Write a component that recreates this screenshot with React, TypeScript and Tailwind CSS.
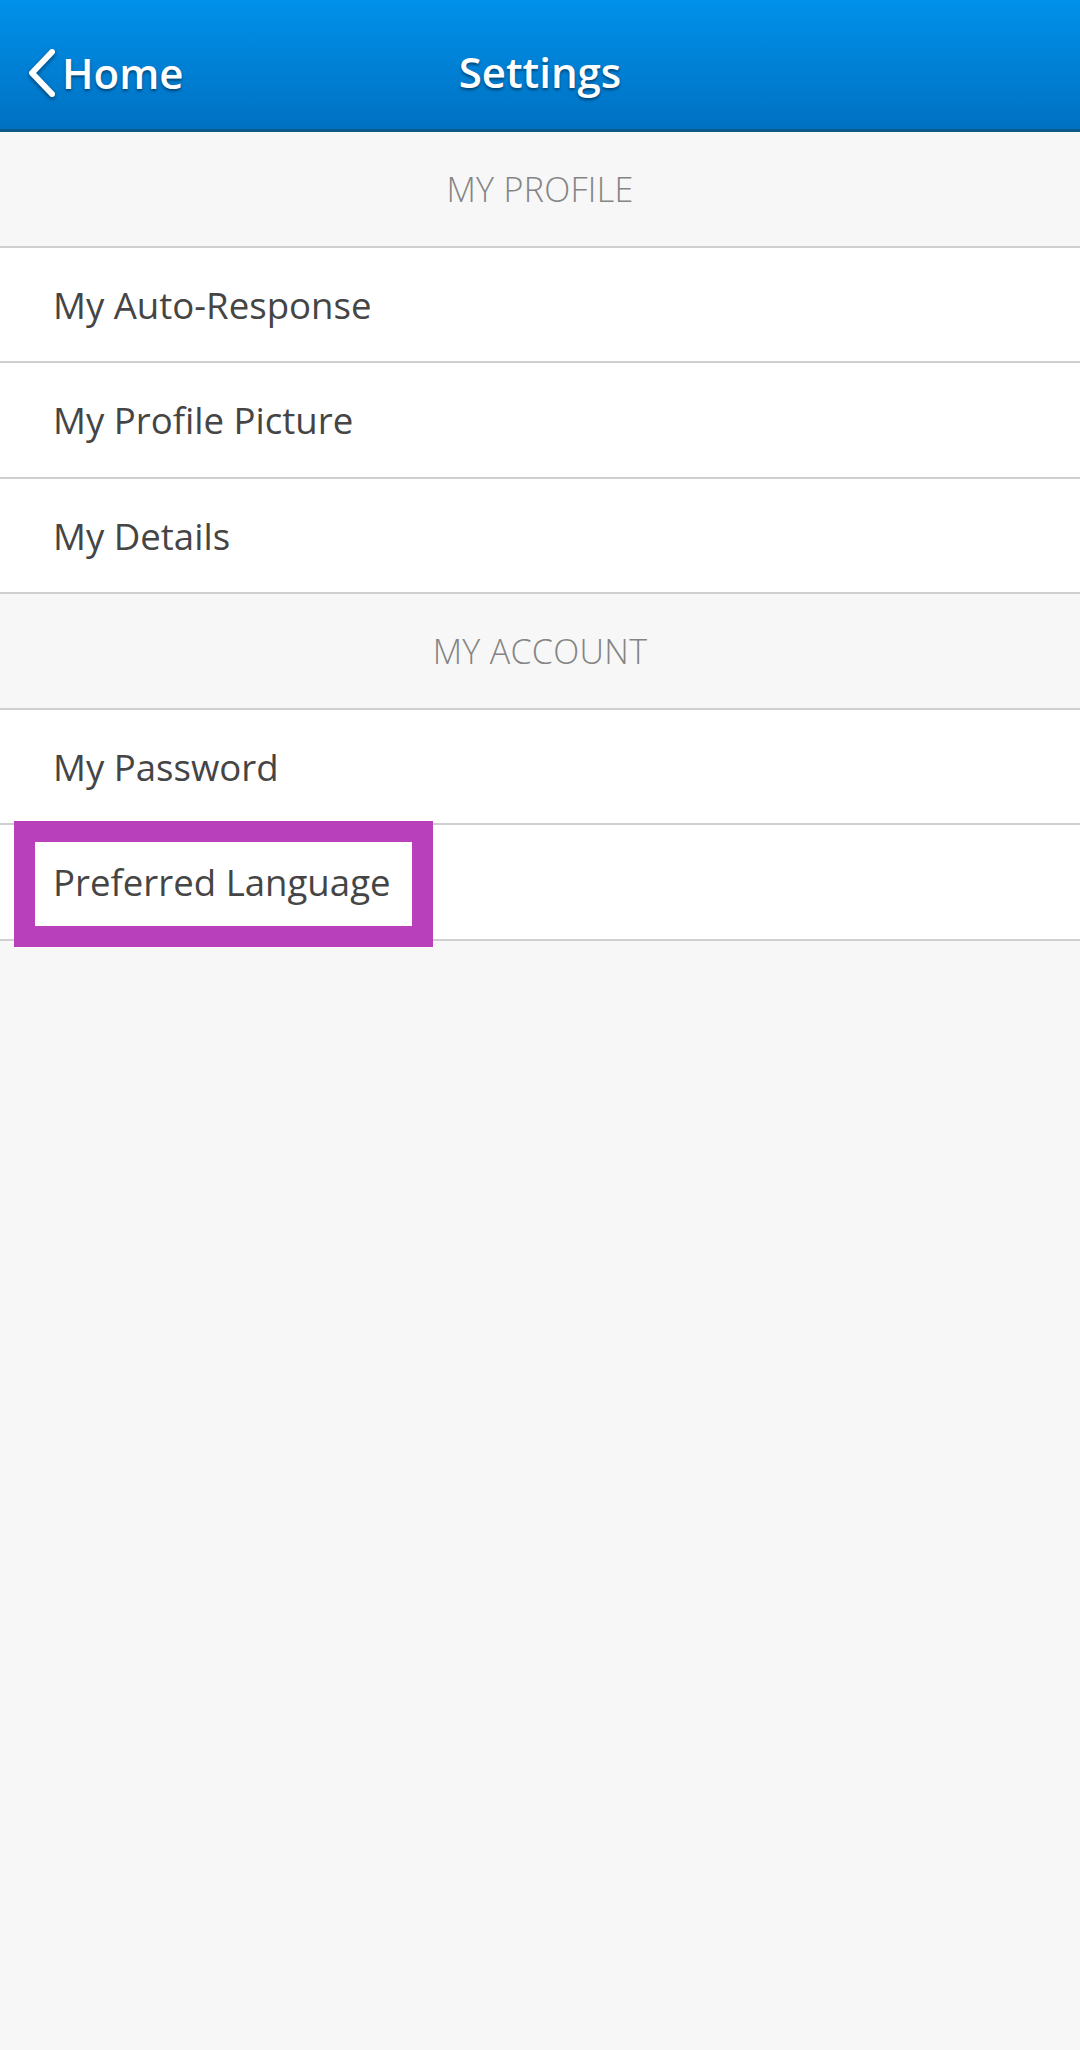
import React from "react";

function Row({ label }: { label: string }) {
  return (
    <div className="h-[115.5px] bg-white border-b-2 border-[#cfcfcf] flex items-center pl-[53px]">
      <span className="text-[36.6px] text-[#454545] leading-none pt-[2px]">{label}</span>
    </div>
  );
}

function SectionHeader({ label }: { label: string }) {
  return (
    <div className="h-[115.5px] bg-[#f7f7f7] border-b-2 border-[#cfcfcf] flex items-center justify-center">
      <span className="text-[34px] font-light text-[#848484] leading-none uppercase tracking-[0.3px]">{label}</span>
    </div>
  );
}

export default function App() {
  return (
    <div
      className="w-[1080px] h-[2050px] bg-[#f7f7f7] relative overflow-hidden"
      style={{ fontFamily: '"Open Sans", "Noto Sans", sans-serif' }}
    >
      <header className="h-[132px] bg-gradient-to-b from-[#0091ea] to-[#0071c2] border-b-[3px] border-[#0b5a88] relative flex items-center justify-center">
        <div className="absolute left-[24px] top-[48px] flex items-center">
          <svg width="36" height="50" viewBox="0 0 36 50" className="[filter:drop-shadow(0_2px_2px_rgba(0,0,0,0.45))]">
            <path d="M28 4 L8 25 L28 46" fill="none" stroke="#ffffff" strokeWidth="6" strokeLinecap="round" strokeLinejoin="round" />
          </svg>
          <span className="text-[42px] font-semibold text-white leading-none ml-[2px] [text-shadow:0_2px_3px_rgba(0,0,0,0.45)]">
            Home
          </span>
        </div>
        <span className="text-[42px] font-semibold text-white leading-none mt-[14px] [text-shadow:0_2px_3px_rgba(0,0,0,0.45)]">
          Settings
        </span>
      </header>

      <SectionHeader label="My Profile" />
      <Row label="My Auto-Response" />
      <Row label="My Profile Picture" />
      <Row label="My Details" />
      <SectionHeader label="My Account" />
      <Row label="My Password" />
      <Row label="Preferred Language" />

      <div className="absolute left-[14px] top-[821px] w-[419px] h-[126px] border-[21px] border-[#b841bb] pointer-events-none" />
    </div>
  );
}
